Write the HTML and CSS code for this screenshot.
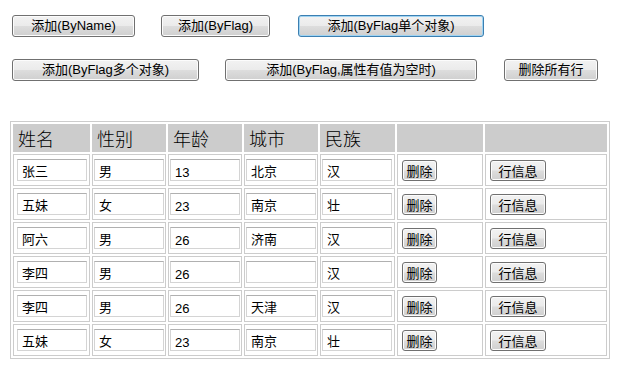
FILE: index.html
```html
<!DOCTYPE html>
<html>
<head>
<meta charset="utf-8">
<link rel="stylesheet" href="styles.css">
</head>
<body>
<div class="toolbar">
  <div class="btn-row">
    <button class="btn w-byname">添加(ByName)</button>
    <button class="btn w-byflag">添加(ByFlag)</button>
    <button class="btn btn-focus w-single">添加(ByFlag单个对象)</button>
  </div>
  <div class="btn-row">
    <button class="btn w-multi">添加(ByFlag多个对象)</button>
    <button class="btn w-empty">添加(ByFlag,属性有值为空时)</button>
    <button class="btn w-delall">删除所有行</button>
  </div>
</div>
<table class="grid">
  <thead>
    <tr>
      <th class="c-name">姓名</th>
      <th class="c-std">性别</th>
      <th class="c-std">年龄</th>
      <th class="c-std">城市</th>
      <th class="c-nation">民族</th>
      <th class="c-del"></th>
      <th class="c-info"></th>
    </tr>
  </thead>
  <tbody>
    <tr>
      <td class="first"><input class="field" value="张三"></td>
      <td><input class="field" value="男"></td>
      <td><input class="field num" value="13"></td>
      <td><input class="field" value="北京"></td>
      <td><input class="field" value="汉"></td>
      <td><button class="small-btn del">删除</button></td>
      <td><button class="small-btn info">行信息</button></td>
    </tr>
    <tr>
      <td class="first"><input class="field" value="五妹"></td>
      <td><input class="field" value="女"></td>
      <td><input class="field num" value="23"></td>
      <td><input class="field" value="南京"></td>
      <td><input class="field" value="壮"></td>
      <td><button class="small-btn del">删除</button></td>
      <td><button class="small-btn info">行信息</button></td>
    </tr>
    <tr>
      <td class="first"><input class="field" value="阿六"></td>
      <td><input class="field" value="男"></td>
      <td><input class="field num" value="26"></td>
      <td><input class="field" value="济南"></td>
      <td><input class="field" value="汉"></td>
      <td><button class="small-btn del">删除</button></td>
      <td><button class="small-btn info">行信息</button></td>
    </tr>
    <tr>
      <td class="first"><input class="field" value="李四"></td>
      <td><input class="field" value="男"></td>
      <td><input class="field num" value="26"></td>
      <td><input class="field" value=""></td>
      <td><input class="field" value="汉"></td>
      <td><button class="small-btn del">删除</button></td>
      <td><button class="small-btn info">行信息</button></td>
    </tr>
    <tr>
      <td class="first"><input class="field" value="李四"></td>
      <td><input class="field" value="男"></td>
      <td><input class="field num" value="26"></td>
      <td><input class="field" value="天津"></td>
      <td><input class="field" value="汉"></td>
      <td><button class="small-btn del">删除</button></td>
      <td><button class="small-btn info">行信息</button></td>
    </tr>
    <tr>
      <td class="first"><input class="field" value="五妹"></td>
      <td><input class="field" value="女"></td>
      <td><input class="field num" value="23"></td>
      <td><input class="field" value="南京"></td>
      <td><input class="field" value="壮"></td>
      <td><button class="small-btn del">删除</button></td>
      <td><button class="small-btn info">行信息</button></td>
    </tr>
  </tbody>
</table>
</body>
</html>
```

FILE: styles.css
```css
html, body {
  margin: 0;
  padding: 0;
  background: #ffffff;
}
body {
  font-family: "Liberation Sans", "Noto Sans CJK SC", sans-serif;
  font-size: 13px;
  color: #000;
  padding: 15px 0 0 12px;
}
.toolbar {
  display: flex;
  flex-direction: column;
  gap: 22px;
}
.btn-row {
  display: flex;
  gap: 26px;
}
.btn {
  height: 22px;
  box-sizing: border-box;
  padding: 0;
  font-family: "Liberation Sans", "Noto Sans CJK SC", sans-serif;
  font-size: 13px;
  line-height: 18px;
  color: #000;
  border: 1px solid #707070;
  border-radius: 3px;
  background: linear-gradient(#f2f2f2 0%, #ebebeb 48%, #dddddd 52%, #cfcfcf 100%);
  box-shadow: inset 0 0 0 1px #fcfcfc;
}
.btn-focus {
  border-color: #3c7fb1;
  box-shadow: inset 0 0 0 1px #9fd4f3;
}
.w-byname { width: 123px; }
.w-byflag { width: 109px; }
.w-single { width: 186px; margin-left: 2px; }
.w-multi { width: 187px; }
.w-empty { width: 252px; }
.w-delall { width: 94px; margin-left: 1px; }

.grid {
  margin: 40px 0 0 -2px;
  border: 1px solid #cccccc;
  border-spacing: 2px;
  table-layout: fixed;
  width: 600px;
  box-sizing: border-box;
}
.grid th {
  background: #cccccc;
  border: 1px solid #cccccc;
  height: 28px;
  padding: 0 0 0 4px;
  text-align: left;
  font-family: "Noto Sans CJK SC", sans-serif;
  font-weight: 300;
  font-size: 18px;
  line-height: 26px;
  color: #000;
  box-sizing: border-box;
}
.grid td {
  border: 1px solid #cccccc;
  padding: 4px 1px 4px 1px;
  height: 32px;
  box-sizing: border-box;
  vertical-align: middle;
}
.grid td.first {
  padding-left: 3px;
}
.c-name { width: 77px; }
.c-std { width: 74px; }
.c-nation { width: 75px; }
.c-del { width: 86px; }
.c-info { width: 122px; }
.field {
  display: block;
  width: 70px;
  height: 22px;
  box-sizing: border-box;
  margin: 0;
  padding: 0 4px;
  border: 1px solid #d4d4d4;
  border-top-color: #b0b0b0;
  font-family: "Noto Sans CJK SC", sans-serif;
  font-size: 13px;
  color: #000;
  background: #fff;
}
.field.num {
  font-family: "Liberation Sans", sans-serif;
  padding-top: 4px;
}
.small-btn {
  display: block;
  height: 21px;
  box-sizing: border-box;
  padding: 0;
  margin-left: 3px;
  font-family: "Noto Sans CJK SC", sans-serif;
  font-size: 13px;
  line-height: 17px;
  color: #000;
  border: 1px solid #707070;
  border-radius: 3px;
  background: linear-gradient(#f2f2f2 0%, #ebebeb 48%, #dddddd 52%, #cfcfcf 100%);
  box-shadow: inset 0 0 0 1px #fcfcfc;
}
.small-btn.del {
  width: 35px;
  margin-left: 3px;
}
.small-btn.info {
  width: 56px;
  margin-left: 3px;
}
```
